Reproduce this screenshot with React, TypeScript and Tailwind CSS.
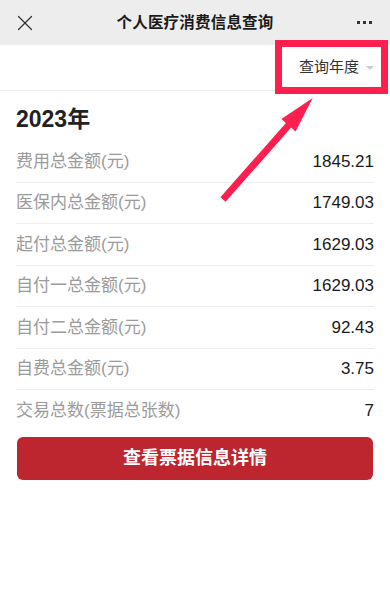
import { X } from "lucide-react";

const rows = [
  { label: "费用总金额(元)", value: "1845.21" },
  { label: "医保内总金额(元)", value: "1749.03" },
  { label: "起付总金额(元)", value: "1629.03" },
  { label: "自付一总金额(元)", value: "1629.03" },
  { label: "自付二总金额(元)", value: "92.43" },
  { label: "自费总金额(元)", value: "3.75" },
  { label: "交易总数(票据总张数)", value: "7" },
];

const Header = () => (
  <div className="h-[45px] bg-[#ededed] flex items-center justify-between">
    <div className="w-[60px] pl-[12px] flex items-center">
      <X size={26} strokeWidth={1.15} className="text-[#333]" />
    </div>
    <div className="flex-1 text-center text-[15.5px] font-semibold text-[#1a1a1a] tracking-[0.2px]">
      个人医疗消费信息查询
    </div>
    <div className="w-[60px] pr-[18px] flex justify-end items-center gap-[3px]">
      <span className="w-[3px] h-[3px] bg-[#333]" />
      <span className="w-[3px] h-[3px] bg-[#333]" />
      <span className="w-[3px] h-[3px] bg-[#333]" />
    </div>
  </div>
);

export default function App() {
  return (
    <div className="w-[390px] h-[606px] bg-white relative overflow-hidden font-['Liberation_Sans','Noto_Sans_CJK_SC',sans-serif]">
      <Header />

      <div className="h-[46px] flex items-center justify-end pr-[16px] border-b border-[#eeeeee]">
        <span className="text-[15px] text-[#333]">查询年度</span>
        <span className="ml-[7px] w-0 h-0 border-l-[4px] border-r-[4px] border-t-[4px] border-l-transparent border-r-transparent border-t-[#cccccc]" />
      </div>

      <div className="px-[16px]">
        <div className="h-[50px] pt-[7px] flex items-center text-[23px] font-bold text-[#222]">2023年</div>
        {rows.map((r, i) => (
          <div
            key={r.label}
            className={
              "h-[41.5px] flex items-center justify-between " +
              (i < rows.length - 1 ? "border-b border-[#eeeeee]" : "")
            }
          >
            <span className="text-[17px] text-[#9b9b9b]">{r.label}</span>
            <span className="text-[17px] font-medium text-[#1a1a1a]">{r.value}</span>
          </div>
        ))}
      </div>

      <div className="px-[17px] mt-[5px]">
        <button className="w-full h-[43px] rounded-[6px] bg-[#bd262e] text-white text-[18px] font-semibold flex items-center justify-center">
          查看票据信息详情
        </button>
      </div>

      {/* annotation overlay */}
      <div className="absolute left-[275px] top-[40px] w-[113px] h-[54px] border-[7px] border-[#ff1f4f]" />
      <svg className="absolute left-0 top-0 pointer-events-none" width="390" height="606" viewBox="0 0 390 606">
        <polygon
          fill="#ff1f4f"
          points="220.4,197.2 285.9,123 281.4,119 312.7,98 295.6,131.6 291.1,127.6 225.6,201.8"
        />
      </svg>
    </div>
  );
}
